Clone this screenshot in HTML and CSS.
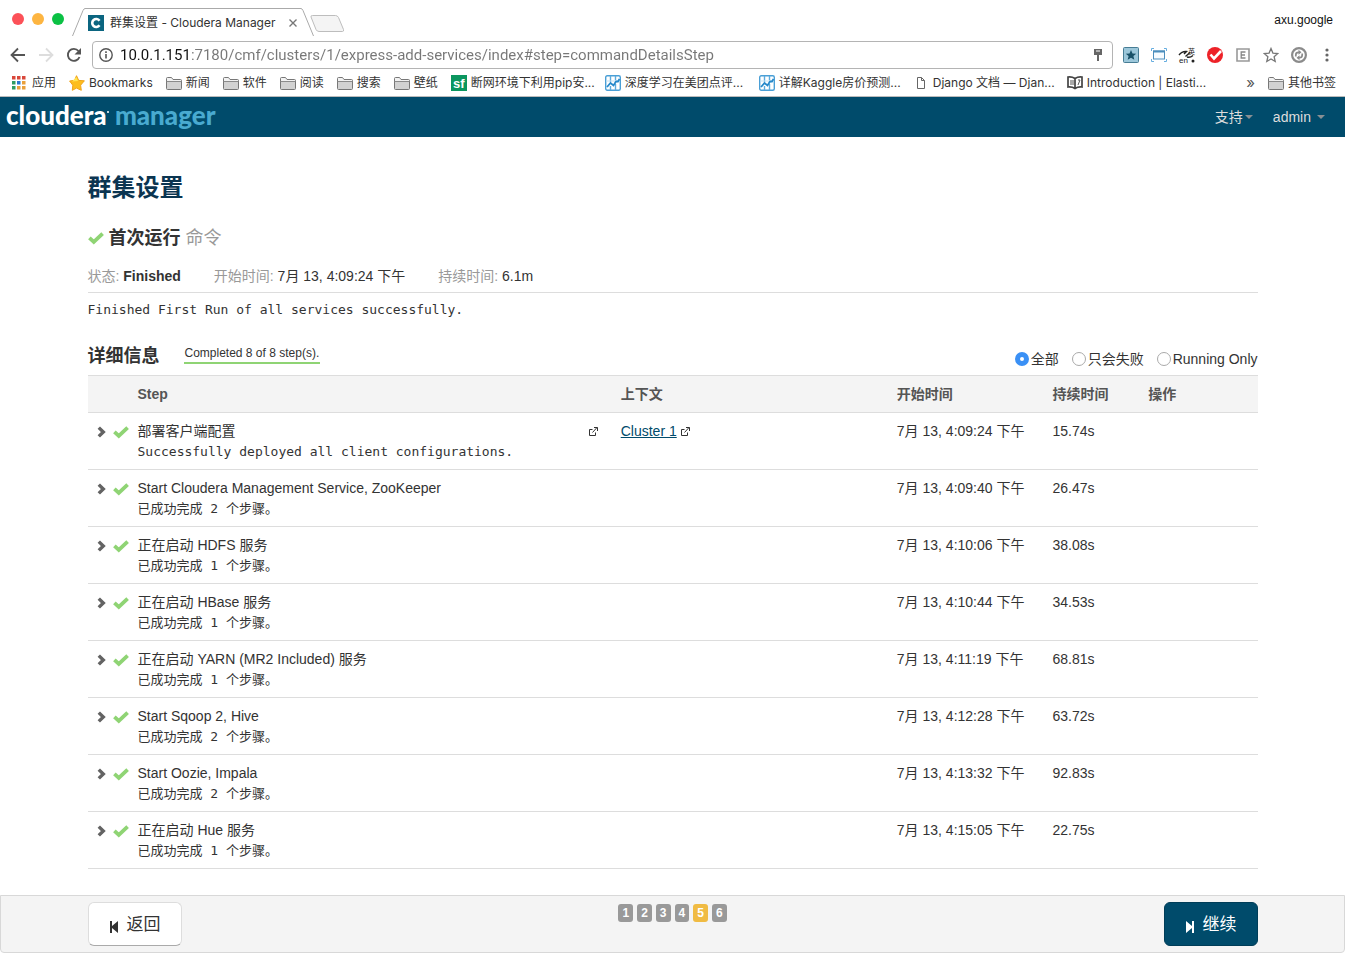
FILE: index.html
```html
<!DOCTYPE html>
<html lang="zh-CN">
<head>
<meta charset="utf-8">
<title>群集设置 - Cloudera Manager</title>
<link rel="stylesheet" href="styles.css">
</head>
<body>
<svg class="defs" aria-hidden="true">
  <symbol id="check" viewBox="0 0 16 14"><path d="M1.400 6.800 5.800 10.800 14.600 2.600" fill="none" stroke="#8fd474" stroke-width="3.800"/></symbol>
  <symbol id="chevron" viewBox="0 0 10 12"><path d="M1.800 1.600 6.300 6 1.800 10.400" fill="none" stroke="#636363" stroke-width="3.400"/></symbol>
  <symbol id="external" viewBox="0 0 9 9"><path d="M3.500 2.500h-3v6h6v-3M3.500 5.500l4.500-5M5 .5h3.500V4" fill="none" stroke="#333"/></symbol>
  <symbol id="folder" viewBox="0 0 16 13"><path d="M.5 11.500V1.500q0-1 1-1h4l1.500 2h7.500q1 0 1 1v8q0 1-1 1h-13q-1 0-1-1z" fill="#f2f2f2" stroke="#777"/><path d="M1 4.500h14v7.500H1z" fill="#d2d2d2"/><path d="M.5 4.500h15" stroke="#8b8b8b"/></symbol>
  <symbol id="chart" viewBox="0 0 16 16"><rect x=".7" y=".7" width="14.600" height="14.600" rx="1.500" fill="#fff" stroke="#4a9fd6" stroke-width="1.400"/><path d="M5.500 1v6M10.500 1v4M5.500 11v4M10.500 9v6" stroke="#5dabdd" stroke-width="1.400"/><path d="M1 6h14" stroke="#c3e0f2"/><path d="M2 12 5.500 8 8.500 10.500 11 6.500h2L14.500 4" fill="none" stroke="#2588ca" stroke-width="1.800"/></symbol>
</svg>

<header class="browser">
  <div class="tabstrip">
    <div class="lights"><i class="light red"></i><i class="light amber"></i><i class="light green"></i></div>
    <div class="tab">
      <svg class="tab-edge" width="13" height="28" viewBox="0 0 13 28"><path d="M.5 28 11 2.500Q12 .5 13 .5" fill="none" stroke="#aaa"/></svg>
      <div class="tab-body">
        <svg width="16" height="16" viewBox="0 0 16 16"><path fill="#0b6580" d="M0 0h16v16H0z"/><path d="M11.500 5.700A4 4 0 1 0 11.500 10.300" fill="none" stroke="#fff" stroke-width="2.600"/></svg>
        <span class="tab-title">群集设置 - Cloudera Manager</span>
        <button class="plain" aria-label="Close tab"><svg width="8" height="8" viewBox="0 0 8 8"><path d="m.5.5 7 7m0-7-7 7" stroke="#777" stroke-width="1.400"/></svg></button>
      </div>
      <svg class="tab-edge" width="13" height="28" viewBox="0 0 13 28"><path d="M0 .5Q1 .5 2 2.500L12.500 28" fill="none" stroke="#aaa"/></svg>
    </div>
    <button class="plain new-tab" aria-label="New tab"><svg width="34" height="17" viewBox="0 0 34 17"><path d="M2.500.5h23q2 0 3 2l5 12q.5 2-1 2H9q-2 0-3-2L1 2Q.5.5 2.500.5z" fill="#f4f4f4" stroke="#bdbdbd"/></svg></button>
    <span class="profile">axu.google</span>
  </div>

  <div class="toolbar">
    <div class="nav">
      <button class="plain" aria-label="Back"><svg width="16" height="16" viewBox="0 0 16 16"><path d="M15 8H2M8 1.500 1.500 8 8 14.500" fill="none" stroke="#555" stroke-width="1.800"/></svg></button>
      <button class="plain" aria-label="Forward"><svg width="16" height="16" viewBox="0 0 16 16"><path d="M1 8h13M8 1.500 14.500 8 8 14.500" fill="none" stroke="#ddd" stroke-width="1.800"/></svg></button>
      <button class="plain" aria-label="Reload"><svg width="16" height="16" viewBox="0 0 16 16"><path d="M13.500 10A6 6 0 1 1 12.500 4" fill="none" stroke="#555" stroke-width="1.900"/><path d="M15 1v6.500H8.500z" fill="#555"/></svg></button>
    </div>
    <div class="omnibox">
      <svg width="14" height="14" viewBox="0 0 14 14"><circle cx="7" cy="7" r="6.200" fill="none" stroke="#555" stroke-width="1.400"/><path d="M7 6v4.500M7 3.300v1.600" stroke="#555" stroke-width="1.600"/></svg>
      <input class="url" type="text" aria-label="Address" value="10.0.1.151:7180/cmf/clusters/1/express-add-services/index#step=commandDetailsStep">
      <svg width="8" height="12" viewBox="0 0 8 12"><path d="M0 0h8v6H5v6H3V6H0z" fill="#666"/><path d="M2 2h4" stroke="#fff"/></svg>
    </div>
    <div class="extensions">
      <button class="plain" aria-label="Bookmark manager"><svg width="16" height="16" viewBox="0 0 16 16"><rect x=".5" y=".5" width="15" height="15" rx="1" fill="#9cc7da" stroke="#477d95"/><path d="m8 3 1.500 3.400 3.700.3-2.800 2.400.9 3.700L8 10.800l-3.300 2 .9-3.700-2.800-2.400 3.700-.3z" fill="#195168"/></svg></button>
      <button class="plain" aria-label="Screen capture"><svg width="16" height="14" viewBox="0 0 16 14"><rect x="2.500" y="3" width="11" height="8" fill="#f6fbff" stroke="#4c8ebd"/><path d="M2 3.500h12" stroke="#4c8ebd" stroke-width="2"/><path d="M.5 3V.5H3M13 .5h2.500V3M.5 11v2.500H3M13 13.500h2.500V11" fill="none" stroke="#67aee0"/></svg></button>
      <button class="plain" aria-label="Translate"><svg width="18" height="18" viewBox="0 0 18 18"><path d="M1 9Q4 5 8.500 5.500L6 8M7.500 10.500 12 6.500M9 11q3 1 6-1.500" fill="none" stroke="#222" stroke-width="1.400"/><text x="1" y="17" class="glyph">en</text><text x="10" y="8" class="glyph-cjk">英</text><circle cx="15" cy="15" r="1.500" fill="#222"/></svg></button>
      <button class="plain" aria-label="Security check"><svg width="16" height="16" viewBox="0 0 16 16"><circle cx="8" cy="8" r="8" fill="#ed2228"/><path d="m3.500 7.500 3.500 4 7-7.500" fill="none" stroke="#fff" stroke-width="2.600"/></svg></button>
      <button class="plain" aria-label="Evernote"><svg width="14" height="14" viewBox="0 0 14 14"><path d="M1 1h12v12H1z" fill="#fff" stroke="#999" stroke-width="1.600"/><path d="M9.500 4H5.200v6h4.300M5 7h4" fill="none" stroke="#888" stroke-width="1.300"/></svg></button>
      <button class="plain" aria-label="Bookmark this page"><svg width="16" height="16" viewBox="0 0 16 16"><path d="m8 1.500 1.900 4.600 4.900.4-3.700 3.200 1.100 4.800L8 12l-4.200 2.500 1.100-4.800L1.200 6.500l4.900-.4z" fill="none" stroke="#777" stroke-width="1.300"/></svg></button>
      <button class="plain" aria-label="Sync"><svg width="16" height="16" viewBox="0 0 16 16"><circle cx="8" cy="8" r="6.900" fill="none" stroke="#8b8b8b" stroke-width="2.200"/><path d="M4.800 9.500V8q0-2.700 2.700-2.700H8M11.200 6.500V8q0 2.700-2.700 2.700H8" fill="none" stroke="#8b8b8b" stroke-width="1.700"/><path d="M7.500 2.800 10.500 5.300 7.500 7.800zM8.500 8.200v5L5.500 10.700z" fill="#8b8b8b"/></svg></button>
      <button class="plain" aria-label="Menu"><svg width="4" height="14" viewBox="0 0 4 14"><g fill="#666"><circle cx="2" cy="2" r="1.600"/><circle cx="2" cy="7" r="1.600"/><circle cx="2" cy="12" r="1.600"/></g></svg></button>
    </div>
  </div>

  <nav class="bookmarks" aria-label="Bookmarks">
    <a class="bookmark apps" href="#"><svg width="14" height="14" viewBox="0 0 14 14"><path fill="#d9483b" d="M0 0h3.500v3.500H0zM5 0h3.500v3.500H5zM10 0h3.500v3.500H10z"/><path fill="#2f9c62" d="M0 5h3.500v3.500H0zM0 10h3.500v3.500H0z"/><path fill="#2b77d0" d="M5 5h3.500v3.500H5z"/><path fill="#e9a03b" d="M10 5h3.500v3.500H10zM5 10h3.500v3.500H5zM10 10h3.500v3.500H10z"/></svg>应用</a>
    <a class="bookmark" href="#"><svg width="16" height="16" viewBox="0 0 16 16"><path d="m7.500.7 2.200 4.700 5.700.4-3.800 4.400.7 5.100-4.800-2.200-4.200 2.200.5-5.100L.6 6l5-.7z" fill="#fdbd1c" stroke="#f0a31a"/><path d="m7.500 2 1.500 4-6 .5z" fill="#ffe552"/></svg>Bookmarks</a>
    <a class="bookmark" href="#"><svg width="16" height="13"><use href="#folder"/></svg>新闻</a>
    <a class="bookmark" href="#"><svg width="16" height="13"><use href="#folder"/></svg>软件</a>
    <a class="bookmark" href="#"><svg width="16" height="13"><use href="#folder"/></svg>阅读</a>
    <a class="bookmark" href="#"><svg width="16" height="13"><use href="#folder"/></svg>搜索</a>
    <a class="bookmark" href="#"><svg width="16" height="13"><use href="#folder"/></svg>壁纸</a>
    <a class="bookmark long" href="#"><svg width="16" height="16" viewBox="0 0 16 16"><path fill="#0b965f" d="M0 0h16v16H0z"/><text x="2" y="13" class="sf">sf</text></svg>断网环境下利用pip安...</a>
    <a class="bookmark long" href="#"><svg width="16" height="16"><use href="#chart"/></svg>深度学习在美团点评...</a>
    <a class="bookmark long" href="#"><svg width="16" height="16"><use href="#chart"/></svg>详解Kaggle房价预测...</a>
    <a class="bookmark long" href="#"><svg width="16" height="12" viewBox="0 0 16 12"><path d="M4.500.5h4l3 3v8h-7zM8.500.5v3h3" fill="#fff" stroke="#666"/></svg>Django 文档 — Djan...</a>
    <a class="bookmark long" href="#"><svg width="16" height="14" viewBox="0 0 16 14"><path d="M8 2.500Q5 .5 1 1v10q4-.5 7 1.500 3-2 7-1.500V1Q11 .5 8 2.500zV12.500" fill="#fff" stroke="#444" stroke-width="1.700"/><path d="M4 4v5M11 4h2l-2 5M6 4v5" fill="none" stroke="#555"/></svg>Introduction | Elasti...</a>
    <button class="plain overflow" aria-label="More bookmarks">»</button>
    <a class="bookmark" href="#"><svg width="16" height="13"><use href="#folder"/></svg>其他书签</a>
  </nav>
</header>

<div class="appbar">
  <a class="brand" href="#">cloudera<i></i> <span>manager</span></a>
  <nav class="menu">
    <button class="plain menu-item">支持<i class="caret"></i></button>
    <button class="plain menu-item spaced">admin<i class="caret"></i></button>
  </nav>
</div>

<main class="page">
  <h1>群集设置</h1>
  <h2 class="command"><svg width="16" height="14"><use href="#check"/></svg>首次运行 <small>命令</small></h2>
  <div class="meta">
    <span><em>状态:</em> <b>Finished</b></span>
    <span><em>开始时间:</em> 7月 13, 4:09:24 下午</span>
    <span><em>持续时间:</em> 6.1m</span>
  </div>
  <p class="result mono">Finished First Run of all services successfully.</p>

  <div class="details">
    <h2>详细信息</h2>
    <span class="progress">Completed 8 of 8 step(s).</span>
    <div class="filters">
      <label><input type="radio" name="filter" checked>全部</label>
      <label><input type="radio" name="filter">只会失败</label>
      <label><input type="radio" name="filter">Running Only</label>
    </div>
  </div>

  <table class="steps">
    <colgroup><col class="c-icon"><col class="c-step"><col class="c-context"><col class="c-start"><col class="c-duration"><col></colgroup>
    <thead><tr><th></th><th>Step</th><th>上下文</th><th>开始时间</th><th>持续时间</th><th>操作</th></tr></thead>
    <tbody>
      <tr><td><div class="state"><svg width="10" height="12"><use href="#chevron"/></svg><svg width="16" height="14"><use href="#check"/></svg></div></td><td><div class="step-name">部署客户端配置<a href="#" aria-label="Open step"><svg width="9" height="9"><use href="#external"/></svg></a></div><div class="mono">Successfully deployed all client configurations.</div></td><td><a class="link" href="#">Cluster 1</a> <svg width="9" height="9"><use href="#external"/></svg></td><td>7月 13, 4:09:24 下午</td><td>15.74s</td><td></td></tr>
      <tr><td><div class="state"><svg width="10" height="12"><use href="#chevron"/></svg><svg width="16" height="14"><use href="#check"/></svg></div></td><td><div class="step-name">Start Cloudera Management Service, ZooKeeper</div><div class="mono">已成功完成 2 个步骤。</div></td><td></td><td>7月 13, 4:09:40 下午</td><td>26.47s</td><td></td></tr>
      <tr><td><div class="state"><svg width="10" height="12"><use href="#chevron"/></svg><svg width="16" height="14"><use href="#check"/></svg></div></td><td><div class="step-name">正在启动 HDFS 服务</div><div class="mono">已成功完成 1 个步骤。</div></td><td></td><td>7月 13, 4:10:06 下午</td><td>38.08s</td><td></td></tr>
      <tr><td><div class="state"><svg width="10" height="12"><use href="#chevron"/></svg><svg width="16" height="14"><use href="#check"/></svg></div></td><td><div class="step-name">正在启动 HBase 服务</div><div class="mono">已成功完成 1 个步骤。</div></td><td></td><td>7月 13, 4:10:44 下午</td><td>34.53s</td><td></td></tr>
      <tr><td><div class="state"><svg width="10" height="12"><use href="#chevron"/></svg><svg width="16" height="14"><use href="#check"/></svg></div></td><td><div class="step-name">正在启动 YARN (MR2 Included) 服务</div><div class="mono">已成功完成 1 个步骤。</div></td><td></td><td>7月 13, 4:11:19 下午</td><td>68.81s</td><td></td></tr>
      <tr><td><div class="state"><svg width="10" height="12"><use href="#chevron"/></svg><svg width="16" height="14"><use href="#check"/></svg></div></td><td><div class="step-name">Start Sqoop 2, Hive</div><div class="mono">已成功完成 2 个步骤。</div></td><td></td><td>7月 13, 4:12:28 下午</td><td>63.72s</td><td></td></tr>
      <tr><td><div class="state"><svg width="10" height="12"><use href="#chevron"/></svg><svg width="16" height="14"><use href="#check"/></svg></div></td><td><div class="step-name">Start Oozie, Impala</div><div class="mono">已成功完成 2 个步骤。</div></td><td></td><td>7月 13, 4:13:32 下午</td><td>92.83s</td><td></td></tr>
      <tr><td><div class="state"><svg width="10" height="12"><use href="#chevron"/></svg><svg width="16" height="14"><use href="#check"/></svg></div></td><td><div class="step-name">正在启动 Hue 服务</div><div class="mono">已成功完成 1 个步骤。</div></td><td></td><td>7月 13, 4:15:05 下午</td><td>22.75s</td><td></td></tr>
    </tbody>
  </table>
</main>

<footer class="wizard">
  <div class="wizard-inner">
    <button class="btn"><svg width="8" height="12" viewBox="0 0 8 12"><path d="M0 0h2v5l6-5v12L2 7v5H0z" fill="#333"/></svg>返回</button>
    <div class="pages"><span>1</span><span>2</span><span>3</span><span>4</span><span class="current">5</span><span>6</span></div>
    <button class="btn primary"><svg width="8" height="12" viewBox="0 0 8 12"><path d="M8 0H6v5L0 0v12l6-5v5h2z" fill="#fff"/></svg>继续</button>
  </div>
</footer>
</body>
</html>
```
FILE: styles.css
```css
* { box-sizing: border-box; }

body {
  margin: 0;
  min-height: 100vh;
  display: flex;
  flex-direction: column;
  background: #fff;
  color: #333;
  font: 14px/20px "Liberation Sans", "Noto Sans CJK SC", sans-serif;
}

a { color: inherit; text-decoration: none; }
svg { flex: none; }
.defs { position: absolute; width: 0; height: 0; }

.plain {
  padding: 0;
  border: 0;
  background: none;
  color: inherit;
  font: inherit;
  display: inline-flex;
  align-items: center;
  justify-content: center;
}

/* Browser window */
.browser {
  font: 12px/18px Inter, "Noto Sans CJK SC", sans-serif;
  border-bottom: 1px solid #bbb;
}

.tabstrip { display: flex; height: 36px; padding: 0 12px; }
.lights { display: flex; gap: 8px; padding-top: 13px; width: 60px; }
.light { width: 12px; height: 12px; border-radius: 50%; }
.red { background: #fc5158; }
.amber { background: #fdb541; }
.green { background: #0bc144; }
.tab { display: flex; align-self: flex-end; }
.tab-body {
  display: flex;
  align-items: center;
  height: 28px;
  padding: 0 0 0 3px;
  border-top: 1px solid #aaa;
}
.tab-title { width: 181px; padding-left: 6px; white-space: nowrap; }
.tab-body .plain { width: 16px; }
.new-tab { align-self: flex-start; margin: 15px 0 0 -4px; }
.profile { margin: 11px 0 0 auto; color: #111; font-family: "Liberation Sans", sans-serif; }

.toolbar { display: flex; align-items: center; height: 38px; padding: 0 4px 0 10px; }
.nav { display: flex; gap: 12px; width: 82px; }
.omnibox {
  flex: 1;
  display: flex;
  align-items: center;
  gap: 7px;
  height: 28px;
  padding: 0 10px 0 6px;
  border: 1px solid #b4b4b4;
  border-radius: 4px;
}
.url {
  flex: 1;
  min-width: 0;
  padding: 0;
  border: 0;
  outline: 0;
  font: 15px/20px Roboto, sans-serif;
  color: transparent;
  background: linear-gradient(to right, #111 71px, #777 71px);
  -webkit-background-clip: text;
  background-clip: text;
}
.extensions { display: flex; margin-left: 4px; }
.extensions .plain { width: 28px; height: 28px; }
.glyph { font: 8px "Liberation Sans", sans-serif; fill: #222; }
.glyph-cjk { font: 7px "Noto Sans CJK SC", sans-serif; fill: #222; }
.sf { font: bold 13px "Liberation Sans", sans-serif; fill: #fff; }

.bookmarks {
  display: flex;
  align-items: center;
  gap: 13px;
  height: 22px;
  padding: 0 9px 4px 12px;
  white-space: nowrap;
}
.bookmark { display: flex; align-items: center; gap: 4px; }
.apps { gap: 6px; }
.long { width: 141px; }
.overflow { margin-left: auto; font-size: 15px; color: #555; }

/* Application bar */
.appbar {
  display: flex;
  align-items: center;
  justify-content: space-between;
  height: 40px;
  padding: 0 20px 0 6px;
  background: #004b6b;
  color: #ddd;
}
.brand { padding-bottom: 4px; font: 900 26px/32px Lato, sans-serif; color: #fff; }
.brand span { color: #49aad0; }
.brand i { display: inline-block; width: 2px; height: 2px; border-radius: 50%; background: #fff; vertical-align: 12px; }
.menu { display: flex; gap: 20px; }
.caret { border: 4px solid transparent; border-top-color: #888f93; border-bottom: 0; margin-left: 2px; }
.spaced .caret { margin-left: 6px; }

/* Page */
.page { width: 100%; max-width: 1170px; margin: 0 auto; padding: 31px 0 20px; }
h1 { margin: 0; font-size: 24px; line-height: 40px; color: #0b3551; }
h2 { margin: 0; font-size: 18px; line-height: 30px; }
h2 small { font-size: 18px; font-weight: 400; color: #999; }
.command { display: flex; align-items: center; gap: 5px; margin: 15px 0 13px; }
.meta {
  display: flex;
  gap: 33px;
  padding-bottom: 6px;
  border-bottom: 1px solid #ddd;
}
.meta em { font-style: normal; color: #999; }
.mono { padding-top: 1px; font-family: "DejaVu Sans Mono", "Noto Sans CJK SC", monospace; font-size: 13px; }
td .mono { margin-bottom: -1px; }
.result { margin: 6px 0 21px; }

.details { display: flex; height: 34px; }
.progress {
  align-self: flex-start;
  margin: 3px 0 0 24px;
  padding: 0 1px;
  border-bottom: 2px solid #8fd474;
  font-size: 12px;
  line-height: 18px;
}
.filters { display: flex; align-self: flex-start; gap: 13px; margin: 8px 0 0 auto; }
.filters label { display: flex; align-items: center; gap: 2px; }
.filters input {
  appearance: none;
  width: 14px;
  height: 14px;
  margin: 0;
  border: 1px solid #aaa;
  border-radius: 50%;
  background: #fff;
}
.filters input:checked { border: 5px solid #3a90f5; }

.steps { width: 100%; table-layout: fixed; border-collapse: collapse; text-align: left; }
.c-icon { width: 42px; }
.c-step { width: 41.3%; }
.c-context { width: 23.6%; }
.c-start { width: 13.3%; }
.c-duration { width: 8.2%; }
.steps th, .steps td { padding: 8px; border-bottom: 1px solid #ddd; vertical-align: top; }
.steps th { background: #f4f4f4; border-top: 1px solid #ddd; color: #555; }
.state { display: flex; align-items: center; justify-content: space-between; height: 22px; }
.steps td:first-child { padding-left: 9px; padding-right: 1px; }
.step-name { display: flex; align-items: center; justify-content: space-between; }
.step-name a { display: flex; padding-right: 7px; }
.link { color: #004b6b; text-decoration: underline; }

/* Wizard footer */
.wizard {
  margin-top: auto;
  padding: 6px 0;
  background: #f4f4f4;
  border: 1px solid #d8d8d8;
  border-radius: 0 0 4px 4px;
}
.wizard-inner {
  display: flex;
  justify-content: space-between;
  align-items: flex-start;
  max-width: 1170px;
  margin: 0 auto;
}
.btn {
  display: flex;
  align-items: center;
  gap: 9px;
  height: 44px;
  padding: 2px 20px 0 21px;
  border: 1px solid #ddd;
  border-bottom-color: #aaa;
  border-radius: 6px;
  background: #fff;
  color: #333;
  font: 17px/24px "Liberation Sans", "Noto Sans CJK SC", sans-serif;
}
.btn svg { margin-top: 4px; }
.primary { background: #004b6b; border-color: #003d58; color: #fff; }
.pages { display: flex; gap: 4px; padding-top: 2px; }
.pages span {
  padding: 0 4px;
  border-radius: 3px;
  background: #999;
  color: #fff;
  font-size: 12px;
  font-weight: 700;
  line-height: 18px;
}
.pages .current { background: #f0bb43; }
```
